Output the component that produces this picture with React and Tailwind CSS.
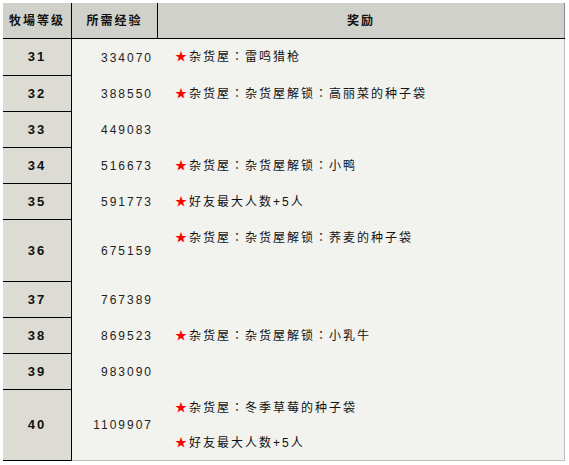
import React from "react";

const rows = [
  { level: 31, exp: "334070", h: "h-[37px]", rewards: ["杂货屋：雷鸣猎枪"] },
  { level: 32, exp: "388550", h: "h-[36px]", rewards: ["杂货屋：杂货屋解锁：高丽菜的种子袋"] },
  { level: 33, exp: "449083", h: "h-[36px]", rewards: [] },
  { level: 34, exp: "516673", h: "h-[36px]", rewards: ["杂货屋：杂货屋解锁：小鸭"] },
  { level: 35, exp: "591773", h: "h-[36px]", rewards: ["好友最大人数+5人"] },
  { level: 36, exp: "675159", h: "h-[62px]", rewards: ["杂货屋：杂货屋解锁：荞麦的种子袋"] },
  { level: 37, exp: "767389", h: "h-[36px]", rewards: [] },
  { level: 38, exp: "869523", h: "h-[36px]", rewards: ["杂货屋：杂货屋解锁：小乳牛"] },
  { level: 39, exp: "983090", h: "h-[36px]", rewards: [] },
  { level: 40, exp: "1109907", h: "h-[71px]", rewards: ["杂货屋：冬季草莓的种子袋", "好友最大人数+5人"] },
];

const App = () => {
  return (
    <div
      className="min-h-screen bg-white p-[3px] text-[12px] tracking-[2px] text-[#111]"
      style={{ fontFamily: '"Liberation Sans", "Noto Sans CJK TC", "Noto Sans CJK SC", sans-serif' }}
    >
      <div className="w-[562px]">
        {/* header */}
        <div className="flex h-[36px] bg-[#d1d1cb] border-b border-black font-bold">
          <div className="w-[69px] flex items-center justify-center border-r border-black">
            牧場等级
          </div>
          <div className="w-[86px] flex items-center justify-center border-r border-black">
            所需经验
          </div>
          <div className="flex-1 flex items-center justify-center border-r border-[#888]">
            奖励
          </div>
        </div>

        {rows.map((row, i) => {
          const last = i === rows.length - 1;
          return (
            <div key={row.level} className={`flex ${row.h}`}>
              <div className="w-[69px] flex items-center justify-center bg-[#dcdcd4] border-r border-b border-black font-bold text-[13px]">
                {row.level}
              </div>
              <div
                className={`w-[86px] flex items-center justify-end pr-[5px] bg-[#f2f2ee] text-[#222] ${
                  last ? "border-b border-[#bdbdbd]" : ""
                }`}
              >
                {row.exp}
              </div>
              <div
                className={`flex-1 flex flex-col bg-[#f2f2ee] pl-[17px] border-r border-[#bdbdbd] ${
                  last ? "border-b" : ""
                }`}
              >
                {row.rewards.map((r) => (
                  <div key={r} className="h-[35px] flex items-center">
                    <span className="text-[#ff0000]">★</span>
                    {r}
                  </div>
                ))}
              </div>
            </div>
          );
        })}
      </div>
    </div>
  );
};

export default App;
